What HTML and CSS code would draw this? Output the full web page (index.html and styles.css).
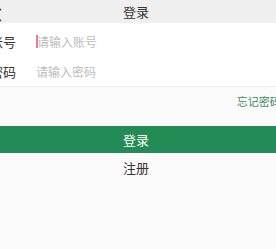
FILE: index.html
```html
<!DOCTYPE html>
<html lang="zh-CN">
<head>
    <meta charset="UTF-8">
    <meta name="viewport" content="width=device-width, initial-scale=1.0">
    <title>登录</title>
    <link rel="stylesheet" href="styles.css">
</head>
<body>
    <div class="page">
        <div class="header">
            <span class="back">
                <svg width="10" height="14" viewBox="0 0 10 14"><path d="M9 1 L2 7 L9 13" fill="none" stroke="#444" stroke-width="1.6"/></svg>
            </span>
            <h1>登录</h1>
        </div>

        <div class="form">
            <div class="row">
                <label>账号</label>
                <div class="field"><span class="caret"></span>请输入账号</div>
            </div>
            <div class="row">
                <label>密码</label>
                <div class="field">请输入密码</div>
            </div>
        </div>

        <div class="forgot">忘记密码?</div>

        <button class="btn-login">登录</button>
        <div class="register">注册</div>
    </div>
</body>
</html>
```

FILE: styles.css
```css
* {
    margin: 0;
    padding: 0;
    box-sizing: border-box;
}

body {
    font-family: "Noto Sans CJK SC", "Noto Sans", sans-serif;
    background: #fafafa;
    color: #333;
    overflow: hidden;
}

.page {
    width: 304px;
    margin-left: -16px;
}

.header {
    height: 23px;
    background: #efefef;
    display: flex;
    align-items: center;
    justify-content: center;
    position: relative;
}

.back {
    position: absolute;
    left: 8px;
    top: 3px;
}

.header h1 {
    font-size: 13px;
    font-weight: normal;
    color: #333;
    line-height: 23px;
}

.form {
    background: #fff;
    padding-top: 3px;
    border-bottom: 1px solid #ececec;
}

.row {
    height: 30px;
    display: flex;
    align-items: center;
    padding-left: 6px;
}

.row label {
    width: 46px;
    font-size: 13px;
    color: #333;
}

.field {
    display: flex;
    align-items: center;
    font-size: 12px;
    color: #bdbdbd;
}

.caret {
    width: 2px;
    height: 13px;
    background: #e8779f;
    margin-right: -1px;
}

.forgot {
    text-align: right;
    font-size: 11px;
    color: #3d8c60;
    padding: 6px 2px 0 0;
    height: 39px;
}

.btn-login {
    display: block;
    width: 100%;
    height: 27px;
    border: none;
    background: #238b56;
    color: #fff;
    font-family: inherit;
    font-size: 13px;
}

.register {
    height: 29px;
    line-height: 29px;
    text-align: center;
    font-size: 13px;
    color: #333;
}
```
